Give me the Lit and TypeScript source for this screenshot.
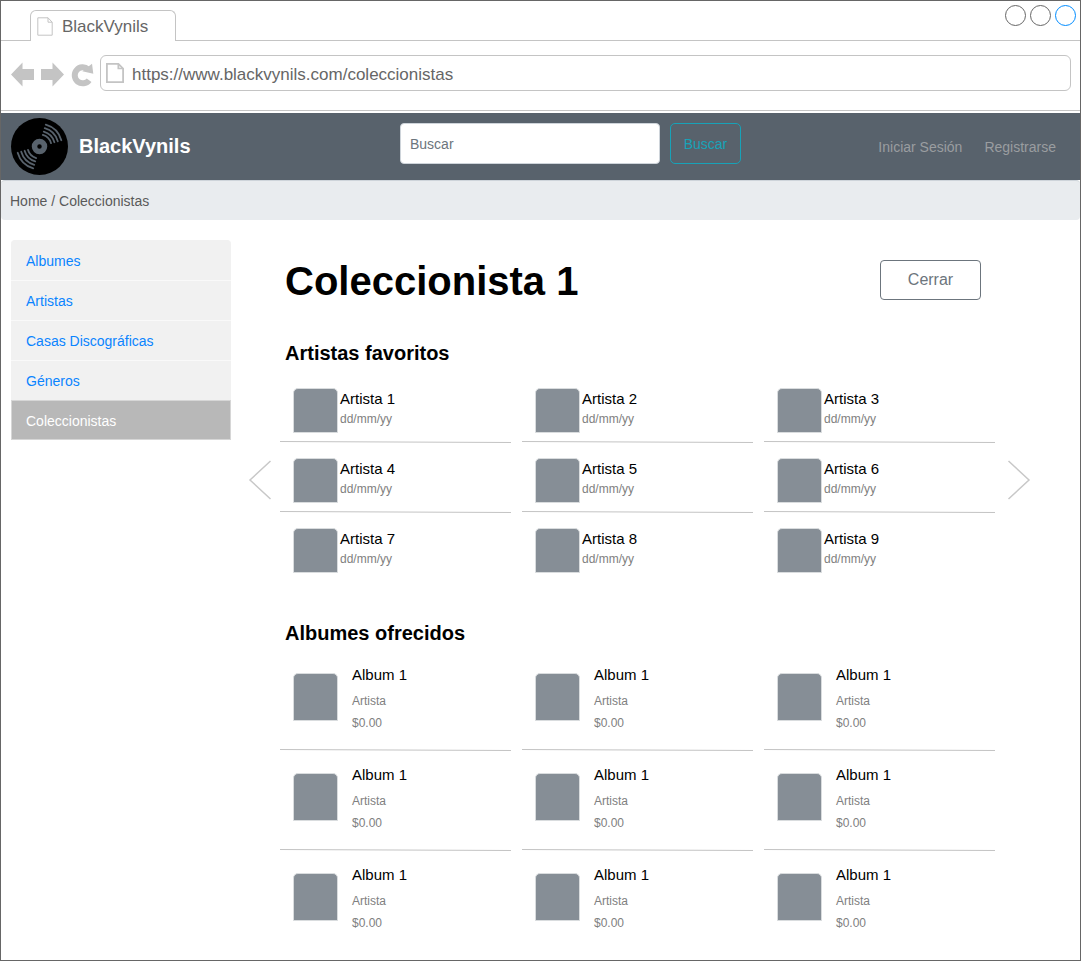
import { LitElement, html, css, svg } from "lit";
import { customElement } from "lit/decorators.js";
import { classMap } from "lit/directives/class-map.js";

interface Artist {
  name: string;
  date: string;
}

interface Album {
  name: string;
  artist: string;
  price: string;
}

const SECTIONS = ["Albumes", "Artistas", "Casas Discográficas", "Géneros", "Coleccionistas"];

const ARTISTS: Artist[] = Array.from({ length: 9 }, (_, i) => ({
  name: `Artista ${i + 1}`,
  date: "dd/mm/yy",
}));

const ALBUMS: Album[] = Array.from({ length: 9 }, () => ({
  name: "Album 1",
  artist: "Artista",
  price: "$0.00",
}));

const pageIcon = (width: number, height: number, stroke: number) => html`
  <svg width=${width} height=${height} viewBox="0 0 16 19" preserveAspectRatio="none" aria-hidden="true">
    <path
      d="M.8 .8H11L15.2 5.200V18.200H.8Z M11 .8V5.200H15.200"
      fill="#fff" stroke="#c4c4c4" stroke-width=${stroke}
    />
  </svg>
`;

/* Thin rule that closes a cell, falling one pixel from left to right. */
const rule = () => html`
  <svg class="rule" viewBox="0 0 231 2" preserveAspectRatio="none" aria-hidden="true">
    <line x1="0" y1=".5" x2="231" y2="1.5" stroke="#c4c4c4" />
  </svg>
`;

const groove = (r: number, from: number, to: number) => {
  const point = (deg: number) => {
    const a = (deg * Math.PI) / 180;
    return `${28.5 + r * Math.cos(a)} ${28.5 + r * Math.sin(a)}`;
  };
  return svg`<path d="M${point(from)}A${r} ${r} 0 0 1 ${point(to)}" />`;
};

@customElement("app-root")
export class AppRoot extends LitElement {
  static styles = css`
    :host {
      display: block;
      font-family: "Liberation Sans", Arial, Helvetica, sans-serif;
      color: #000;
    }
    *,
    *::before {
      box-sizing: border-box;
    }
    button,
    input {
      font-family: inherit;
      margin: 0;
      padding: 0;
      border: 0;
      background: none;
    }
    button {
      cursor: pointer;
    }
    a {
      text-decoration: none;
    }
    h1,
    h2,
    p,
    ul {
      margin: 0;
      padding: 0;
      list-style: none;
    }
    svg {
      display: block;
      flex: none;
      overflow: visible;
    }
    .window {
      min-height: 100vh;
      border: 1px solid #666;
      background: #fff;
    }

    .tabs {
      display: flex;
      justify-content: space-between;
      align-items: flex-end;
      height: 40px;
      padding: 0 4px 0 29px;
      border-bottom: 1px solid #c4c4c4;
    }
    .tab {
      display: flex;
      align-items: center;
      gap: 9px;
      width: 146px;
      height: 31px;
      margin-bottom: -1px;
      padding: 1px 0 0 6px;
      border: 1px solid #c4c4c4;
      border-bottom: 0;
      border-radius: 6px 6px 0 0;
      background: #fff;
      color: #666;
      font-size: 17px;
      line-height: 21px;
    }
    .controls {
      display: flex;
      gap: 4px;
      align-self: flex-start;
      padding-top: 4px;
    }
    .control {
      width: 21px;
      height: 21px;
      border: 1px solid #666;
      border-radius: 50%;
    }
    .control.active {
      border-color: #008cff;
    }

    .toolbar {
      display: flex;
      align-items: center;
      gap: 7px;
      padding: 14px 9px 19px 10px;
      border-bottom: 1px solid #c4c4c4;
      margin-bottom: 2px;
    }
    .address {
      display: flex;
      align-items: center;
      flex: 1;
      gap: 8px;
      height: 36px;
      padding-left: 5px;
      border: 1px solid #c4c4c4;
      border-radius: 6px;
    }
    .url {
      flex: 1;
      min-width: 0;
      height: 34px;
      padding-top: 3px;
      color: #666;
      font-size: 17px;
      outline: none;
    }

    .navbar {
      display: grid;
      grid-template-columns: 389px auto 1fr;
      align-items: center;
      height: 67px;
      padding: 0 24px 0 10px;
      background: #58626c;
    }
    .brand {
      display: flex;
      align-items: center;
      gap: 11px;
      color: #fff;
      font-size: 20px;
      font-weight: bold;
    }
    .search {
      display: flex;
      gap: 10px;
      align-self: start;
      padding-top: 10px;
    }
    .query {
      width: 260px;
      height: 41px;
      padding: 0 9px;
      border: 1px solid #ced4da;
      border-radius: 4px;
      background: #fff;
      color: #6c757d;
      font-size: 14px;
    }
    .query::placeholder {
      color: #6c757d;
      opacity: 1;
    }
    .submit {
      width: 71px;
      height: 41px;
      border: 1px solid #17a2b8;
      border-radius: 5px;
      color: #17a2b8;
      font-size: 14px;
    }
    .account {
      display: flex;
      justify-content: flex-end;
      gap: 22px;
      font-size: 14px;
    }
    .account a {
      color: #9a9da0;
    }

    .crumbs {
      height: 40px;
      padding: 0 9px;
      border-top: 1px solid #ced4da;
      border-radius: 4px;
      background: #e9ecef;
      color: #5a5a5a;
      font-size: 14px;
      line-height: 40px;
    }
    .crumbs a {
      color: inherit;
    }

    .body {
      display: flex;
      align-items: flex-start;
      gap: 18px;
      padding: 20px 50px 0 10px;
    }
    .sidebar {
      flex: 0 0 220px;
      font-size: 14px;
    }
    .sidebar a {
      display: block;
      height: 40px;
      padding-left: 15px;
      border-top: 1px solid #f9f9f9;
      background: #f1f1f1;
      color: #0a84ff;
      line-height: 40px;
    }
    .sidebar li:first-child a {
      border-color: #f1f1f1;
      border-radius: 4px 4px 0 0;
    }
    .sidebar a.current {
      border: 1px solid #d6d6d6;
      padding-left: 14px;
      background: #b8b8b8;
      color: #fff;
    }

    .content {
      display: grid;
      grid-template-columns: 22px 1fr 26px;
      column-gap: 9px;
      flex: 1;
      min-width: 0;
    }
    .title,
    .subtitle,
    .list {
      grid-column: 2;
    }
    .title {
      display: flex;
      justify-content: space-between;
      align-items: flex-start;
      padding: 20px 14px 39px 5px;
    }
    .title h1 {
      font-size: 40px;
      line-height: 42px;
    }
    .close {
      width: 101px;
      height: 40px;
      border: 1px solid #6c757d;
      border-radius: 4px;
      color: #6c757d;
      font-size: 16px;
    }
    .subtitle {
      padding: 0 5px;
      font-size: 20px;
      line-height: 24px;
    }
    .list {
      display: grid;
      grid-template-columns: repeat(3, 1fr);
      column-gap: 11px;
    }
    .artists {
      padding-bottom: 6px;
      margin: 7px 0 33px;
    }
    .albums {
      padding-top: 5px;
    }
    .arrow {
      display: flex;
      align-items: center;
      grid-row: 3;
      margin: 7px 0 33px;
    }
    .previous {
      grid-column: 1;
    }
    .next {
      grid-column: 3;
      justify-content: flex-end;
    }
    .cell {
      display: flex;
      flex-direction: column;
      justify-content: space-between;
      color: #808080;
      font-size: 12px;
    }
    .rule {
      width: 100%;
      height: 2px;
      margin-bottom: -1px;
    }
    .entry {
      display: flex;
      padding-left: 13px;
    }
    .thumb {
      flex: none;
      width: 45px;
      border: 1px solid #d9dcde;
      border-radius: 5px 5px 0 0;
      background: #868e96;
    }
    .name {
      color: #000;
      font-size: 15px;
    }
    .artist {
      height: 70px;
    }
    .artist .entry {
      gap: 2px;
      padding-top: 16px;
      line-height: 21px;
    }
    .artist .thumb {
      height: 45px;
    }
    .album {
      height: 100px;
    }
    .album .entry {
      gap: 14px;
      padding-top: 14px;
      line-height: 22px;
    }
    .album .thumb {
      height: 48px;
      margin-top: 9px;
    }
    .album .name {
      padding-bottom: 4px;
    }
  `;

  private renderChrome() {
    return html`
      <div class="tabs">
        <div class="tab">${pageIcon(16, 19, 1)}<span>BlackVynils</span></div>
        <div class="controls">
          <button class="control" aria-label="Minimizar"></button>
          <button class="control" aria-label="Maximizar"></button>
          <button class="control active" aria-label="Cerrar ventana"></button>
        </div>
      </div>
      <div class="toolbar">
        <button aria-label="Atrás">
          <svg width="23" height="25" viewBox="0 -1 23 25">
            <path d="M0 12.500L11.500 .5V7H23V18H11.500V24.500Z" fill="#c4c4c4" />
          </svg>
        </button>
        <button aria-label="Adelante">
          <svg width="23" height="25" viewBox="0 -1 23 25">
            <path d="M23 12.500L11.500 .5V7H0V18H11.500V24.500Z" fill="#c4c4c4" />
          </svg>
        </button>
        <button aria-label="Recargar">
          <svg width="22" height="25" viewBox="0 -1 22 25">
            <path d="M18.100 18.200A8 8 0 1 1 17.100 7.400" fill="none" stroke="#c4c4c4" stroke-width="6" />
            <path d="M21 1.800L22.300 11.800L11.300 9.200Z" fill="#c4c4c4" />
          </svg>
        </button>
        <div class="address">
          ${pageIcon(18, 20, 1.6)}
          <input class="url" aria-label="Dirección" value="https://www.blackvynils.com/coleccionistas" />
        </div>
      </div>
    `;
  }

  private renderNavbar() {
    return html`
      <header class="navbar">
        <a class="brand" href="#">
          <svg width="57" height="57" viewBox="0 0 57 57" aria-hidden="true">
            <circle cx="28.500" cy="28.500" r="28.500" fill="#000" />
            <circle cx="28.500" cy="28.500" r="5" fill="none" stroke="#58626c" stroke-width="5.500" />
            <g fill="none" stroke="#58626c" stroke-width="1.800" stroke-linecap="round">
              ${[12, 15.5, 19, 22.7].map((r) => [groove(r, -74, -16), groove(r, 106, 164)])}
            </g>
          </svg>
          <span>BlackVynils</span>
        </a>
        <form class="search" @submit=${(e: Event) => e.preventDefault()}>
          <input class="query" type="text" placeholder="Buscar" aria-label="Buscar" />
          <button class="submit">Buscar</button>
        </form>
        <nav class="account">
          <a href="#">Iniciar Sesión</a>
          <a href="#">Registrarse</a>
        </nav>
      </header>
      <nav class="crumbs"><a href="#">Home</a> / <span>Coleccionistas</span></nav>
    `;
  }

  render() {
    return html`
      <div class="window">
        ${this.renderChrome()} ${this.renderNavbar()}
        <div class="body">
          <nav class="sidebar">
            <ul>
              ${SECTIONS.map(
                (name) => html`<li>
                  <a href="#" class=${classMap({ current: name === "Coleccionistas" })}>${name}</a>
                </li>`
              )}
            </ul>
          </nav>
          <main class="content">
            <div class="title">
              <h1>Coleccionista 1</h1>
              <button class="close">Cerrar</button>
            </div>
            <h2 class="subtitle">Artistas favoritos</h2>
            <button class="arrow previous" aria-label="Anterior">
              <svg width="22" height="40" viewBox="0 0 22 40">
                <path d="M21.500 1L1 20L21.500 39" fill="none" stroke="#c8c8c8" stroke-width="1.500" />
              </svg>
            </button>
            <ul class="list artists">
              ${ARTISTS.map(
                (a, i) => html`<li class="cell artist">
                  <div class="entry">
                    <div class="thumb"></div>
                    <div>
                      <p class="name">${a.name}</p>
                      <p>${a.date}</p>
                    </div>
                  </div>
                  ${i < 6 ? rule() : ""}
                </li>`
              )}
            </ul>
            <button class="arrow next" aria-label="Siguiente">
              <svg width="22" height="40" viewBox="0 0 22 40">
                <path d="M.5 1L21 20L.5 39" fill="none" stroke="#c8c8c8" stroke-width="1.500" />
              </svg>
            </button>
            <h2 class="subtitle">Albumes ofrecidos</h2>
            <ul class="list albums">
              ${ALBUMS.map(
                (a, i) => html`<li class="cell album">
                  <div class="entry">
                    <div class="thumb"></div>
                    <div>
                      <p class="name">${a.name}</p>
                      <p>${a.artist}</p>
                      <p>${a.price}</p>
                    </div>
                  </div>
                  ${i < 6 ? rule() : ""}
                </li>`
              )}
            </ul>
          </main>
        </div>
      </div>
    `;
  }
}
